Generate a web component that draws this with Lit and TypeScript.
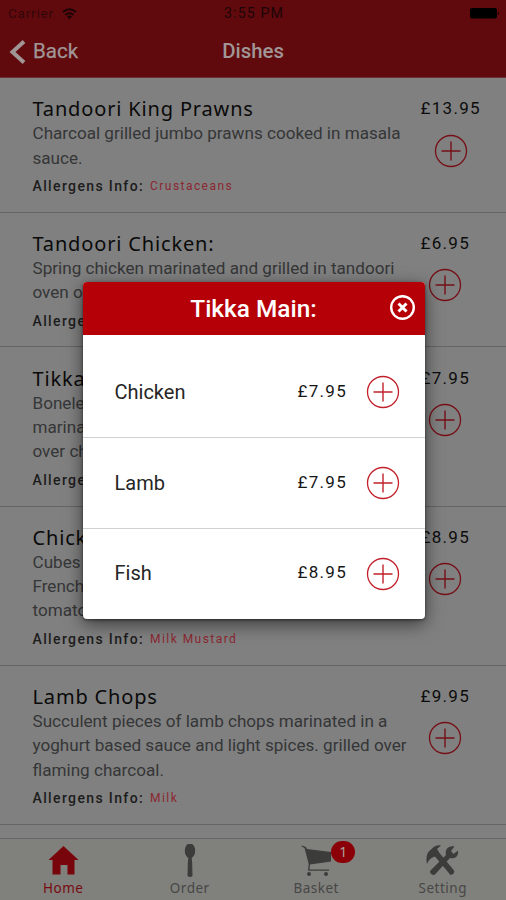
import { LitElement, html, css, svg } from "lit";
import { customElement, property } from "lit/decorators.js";

interface Dish {
  name: string;
  lines: string[];
  allergens: string;
  price: string;
}

const DISHES: Dish[] = [
  { name: "Tandoori King Prawns", lines: ["Charcoal grilled jumbo prawns cooked in masala", "sauce."], allergens: "Crustaceans", price: "£13.95" },
  { name: "Tandoori Chicken:", lines: ["Spring chicken marinated and grilled in tandoori", "oven on the bone."], allergens: "Milk", price: "£6.95" },
  { name: "Tikka Main:", lines: ["Boneless pieces", "marinated and grilled", "over charcoal."], allergens: "Milk", price: "£7.95" },
  { name: "Chicken Shashlik", lines: ["Cubes of chicken", "French mustard", "tomato dressing."], allergens: "Milk Mustard", price: "£8.95" },
  { name: "Lamb Chops", lines: ["Succulent pieces of lamb chops marinated in a", "yoghurt based sauce and light spices. grilled over", "flaming charcoal."], allergens: "Milk", price: "£9.95" },
];

const OPTIONS = [
  { name: "Chicken", price: "£7.95" },
  { name: "Lamb", price: "£7.95" },
  { name: "Fish", price: "£8.95" },
];

@customElement("plus-button")
class PlusButton extends LitElement {
  static styles = css`
    :host { display: block; width: 34px; height: 34px; flex: none; }
    svg { display: block; }
  `;
  render() {
    return html`<svg width="34" height="34" viewBox="0 0 34 34" fill="none" stroke="currentColor">
      <circle cx="17" cy="17" r="15.5" stroke-width="1.3" />
      <path d="M7.500 17h19M17 7.500v19" stroke-width="1.4" />
    </svg>`;
  }
}

@customElement("dish-row")
class DishRow extends LitElement {
  @property({ attribute: false }) dish!: Dish;
  static styles = css`
    :host {
      display: flex;
      box-sizing: border-box;
      padding: 17.100px 0 13.800px 32.500px;
      border-bottom: 1px solid #656566;
      white-space: nowrap;
    }
    .info { width: 388px; flex: none; }
    .name { font: 20px/27px "Noto Sans", sans-serif; letter-spacing: .84px; color: #0a0a0a; height: 26px; }
    .desc { font: 17.100px/24.400px Roboto, sans-serif; color: #353637; }
    .allergens { display: flex; align-items: center; height: 24px; margin-top: 4px; box-sizing: border-box; font-family: Roboto, sans-serif; }
    .label { font-size: 14px; font-weight: 500; letter-spacing: 1.370px; color: #1c1c1c; }
    .value { font-size: 12px; letter-spacing: 1.450px; color: #8c2731; margin-left: 6px; }
    .side { display: flex; flex-direction: column; align-items: center; align-self: flex-start; color: #761017; }
    .price { font: 17px/26px Roboto, sans-serif; letter-spacing: 1.300px; color: #0c0c0c; height: 38.500px; }
  `;
  render() {
    const d = this.dish;
    return html`
      <div class="info">
        <div class="name">${d.name}</div>
        <div class="desc">${d.lines.map((l) => html`<div>${l}</div>`)}</div>
        <div class="allergens"><span class="label">Allergens Info:</span><span class="value">${d.allergens}</span></div>
      </div>
      <div class="side"><div class="price">${d.price}</div><plus-button></plus-button></div>
    `;
  }
}

const homeIcon = svg`<path d="M16.500 2L31.500 16H27.500V30.500H20.500V21H13.500V30.500H5.500V16H1.500Z"/>`;
const spoonIcon = svg`<ellipse cx="17" cy="6.800" rx="5.200" ry="7.500"/><path d="M15.500 12h3l.700 7 .300 13q-2.500 2-5 0l.300-13z"/>`;
const cartIcon = svg`<path d="M2 1.500L6 3 7 5 31 8V17.500L10 20.500 9.500 25.500H29V26.700H8L8.700 20 4.500 4 1.500 2.500Z"/><circle cx="9" cy="30" r="2"/><circle cx="26" cy="30" r="2"/>`;
const toolsIcon = svg`<path d="M1 20C-.500 13 1 8 5 5.500 8 2 12 .500 15 1.500L11 5 13.500 9 28 26.500Q29 30 24.500 31L9 12.500 6.500 13.500Q3 15 1 20Z"/><path d="M28.500 2.500L25 7 27.500 10 32 6.500C33 12 29 15.500 24 14L8.500 31Q4 31 4 27L20 11C18.500 5 23 1 28.500 2.500Z"/>`;

@customElement("app-root")
class AppRoot extends LitElement {
  static styles = css`
    :host { display: block; position: relative; width: 506px; height: 900px; overflow: hidden; background: #808080; }
    .screen { display: flex; flex-direction: column; height: 900px; }
    .top { flex: none; height: 78px; box-sizing: border-box; background: #610a0e; border-bottom: 1px solid #6d3034; }
    .status { display: grid; grid-template-columns: 1fr auto 1fr; align-items: center; height: 27px; padding: 0 6px 0 8px; font: 13.500px/27px Roboto, sans-serif; color: #1c0506; }
    .carrier { display: flex; align-items: center; gap: 8px; letter-spacing: .8px; color: #320608; }
    .time { font-size: 14.200px; letter-spacing: 1.100px; }
    .battery { justify-self: end; }
    .nav { display: grid; grid-template-columns: 1fr auto 1fr; align-items: center; height: 49px; padding: 0 9px; font: 20.500px/49px Roboto, sans-serif; color: #a09696; }
    .back { display: flex; align-items: center; gap: 7px; -webkit-text-stroke: .25px currentColor; }
    .heading { font-weight: 500; font-size: 20.400px; }
    .list { flex: 1; min-height: 0; overflow: hidden; }
    .tabs { flex: none; display: grid; grid-template-columns: repeat(4, 1fr); height: 62px; box-sizing: border-box; border-top: 1px solid #666667; background: #80807c; }
    .tab { display: flex; flex-direction: column; align-items: center; font: 13.500px/18px "Noto Sans", sans-serif; letter-spacing: .5px; color: #474746; }
    .tab.active { color: #780b12; }
    .icon { position: relative; height: 35px; margin-top: 5px; color: #3c3c3b; }
    .active .icon { color: #78050b; }
    .icon svg { display: block; fill: currentColor; }
    .badge { position: absolute; left: 31.500px; top: -3px; width: 24px; height: 22px; border-radius: 11px; background: #8b0008; color: #aaa0a0; font: 14px/22px "Noto Sans", sans-serif; text-align: center; letter-spacing: 0; }
    .dialog { position: absolute; left: 82.500px; top: 282px; width: 342px; height: 337px; border-radius: 4px; background: #fff; box-shadow: 0 5px 18px rgba(0, 0, 0, .55), 0 1px 3px rgba(0, 0, 0, .5); overflow: hidden; }
    .dialog-head { display: grid; grid-template-columns: 36px 1fr 36px; align-items: center; height: 53px; background: #b60007; color: #fff; text-align: center; }
    .dialog-title { font: 500 24.400px/53px Roboto, sans-serif; white-space: nowrap; }
    .option { display: flex; align-items: center; height: 91px; box-sizing: border-box; padding: 0 25px 0 32px; border-bottom: 1px solid #d0d0d0; color: #c2202b; }
    .option.first { height: 103px; padding-top: 12px; }
    .option:last-child { border-bottom: 0; height: 89px; }
    .option-name { flex: 1; font: 20px/28px Roboto, sans-serif; color: #262626; padding-bottom: 1px; }
    .option-price { font: 17px/28px Roboto, sans-serif; letter-spacing: 1.300px; color: #161616; margin-right: 18.500px; padding-bottom: 3px; }
  `;

  tab(label: string, icon: unknown, active = false, badge = "") {
    return html`<div class="tab ${active ? "active" : ""}">
      <div class="icon"><svg width="33" height="35" viewBox="0 0 33 35">${icon}</svg>
      ${badge ? html`<span class="badge">${badge}</span>` : ""}</div>
      ${label}
    </div>`;
  }

  render() {
    return html`
      <div class="screen">
        <header class="top">
          <div class="status">
            <div class="carrier">Carrier
              <svg width="15" height="12" viewBox="0 0 15 12" fill="none" stroke="#1a0405" stroke-width="2"><path d="M1 4Q7.500-1.500 14 4M3.500 7Q7.500 3.500 11.500 7"/><path d="M5 8.500Q7.500 6.500 10 8.500L7.500 11.300Z" fill="#1a0405" stroke="none"/></svg>
            </div>
            <div class="time">3:55 PM</div>
            <svg class="battery" width="30" height="12" viewBox="0 0 30 12"><rect x="0" y="0" width="27" height="10.500" rx="2"/><path d="M28 3.500q2 1.500 0 3.500z"/></svg>
          </div>
          <nav class="nav">
            <div class="back"><svg width="17" height="26" viewBox="0 0 17 26" fill="none" stroke="currentColor" stroke-width="4"><path d="M15 2.500L3.500 13 15 23.500"/></svg>Back</div>
            <div class="heading">Dishes</div>
          </nav>
        </header>
        <main class="list">${DISHES.map((d) => html`<dish-row .dish=${d}></dish-row>`)}</main>
        <footer class="tabs">
          ${this.tab("Home", homeIcon, true)} ${this.tab("Order", spoonIcon)}
          ${this.tab("Basket", cartIcon, false, "1")} ${this.tab("Setting", toolsIcon)}
        </footer>
      </div>
      <section class="dialog">
        <div class="dialog-head">
          <span></span><div class="dialog-title">Tikka Main:</div>
          <svg width="27" height="27" viewBox="0 0 27 27" fill="none" stroke="#fff" stroke-width="2.400"><circle cx="13.500" cy="12.500" r="11.300"/><path d="M9.500 8.500l8 8M17.500 8.500l-8 8" stroke-width="3"/></svg>
        </div>
        ${OPTIONS.map((o, i) => html`<div class="option ${i === 0 ? "first" : ""}">
          <div class="option-name">${o.name}</div><div class="option-price">${o.price}</div><plus-button></plus-button>
        </div>`)}
      </section>
    `;
  }
}
